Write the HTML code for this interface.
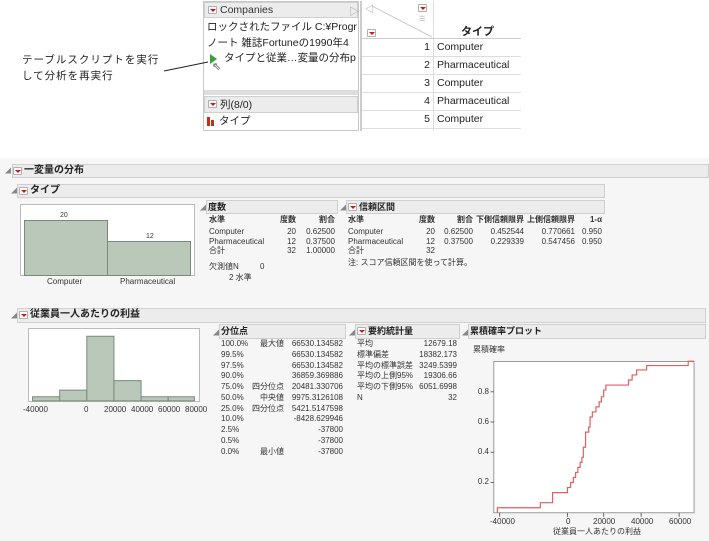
<!DOCTYPE html>
<html><head><meta charset="utf-8"><style>
*{margin:0;padding:0;box-sizing:border-box}
body{width:709px;height:541px;position:relative;background:#fff;font-family:"Liberation Sans","Noto Sans CJK JP",sans-serif;overflow:hidden;color:#222}
.a{position:absolute;white-space:nowrap}
.t{font-size:10.5px;line-height:14px}
.s{font-size:8px;line-height:10px;color:#333}
.r{text-align:right}
.hd{position:absolute;background:#ececec;border:1px solid #cfcfcf}
.ic{position:absolute;width:9px;height:8px;background:#fff;border:1px solid #b0b0b0;border-radius:1px}
.ic:after{content:"";position:absolute;left:1px;top:2px;border-left:3px solid transparent;border-right:3px solid transparent;border-top:3px solid #d01818}
.hb{font-size:10px;font-weight:bold;line-height:14px}
.tri{position:absolute;font-size:6px;color:#888}
.clip{position:absolute;left:204px;top:0;width:154px;height:131px;overflow:hidden}
.clip .a{}
</style></head><body>

<!-- top panel -->
<div class="a" style="left:203px;top:1px;width:156px;height:130px;border:1px solid #c8c8c8;background:#fff"></div>
<div class="hd" style="left:204px;top:2px;width:154px;height:16px"></div>
<div class="ic" style="left:208px;top:6px"></div>
<div class="a t" style="left:220px;top:3px;color:#333">Companies</div>
<div class="a" style="left:349px;top:3px;font-size:10px;color:#999">▷</div>
<div class="clip">
<div class="a t" style="left:3px;top:20px">ロックされたファイル C:¥Progr</div>
<div class="a t" style="left:3px;top:36px">ノート 雑誌Fortuneの1990年4</div>
<div class="a t" style="left:20px;top:51px">タイプと従業…変量の分布p</div>
</div>
<div class="a" style="left:210px;top:54px;width:0;height:0;border-top:5px solid transparent;border-bottom:5px solid transparent;border-left:7px solid #3aa03a"></div>
<div class="a" style="left:212px;top:60px;font-size:11px;color:#555">⇖</div>
<div class="a" style="left:204px;top:90px;width:154px;height:5px;background:#ddd"></div>
<div class="hd" style="left:204px;top:96px;width:154px;height:17px"></div>
<div class="ic" style="left:208px;top:100px"></div>
<div class="a t" style="left:220px;top:98px">列(8/0)</div>
<div class="a" style="left:207px;top:117px;width:3px;height:9px;background:#c0301a"></div>
<div class="a" style="left:211px;top:120px;width:3px;height:6px;background:#c0301a"></div>
<div class="a t" style="left:219px;top:114px">タイプ</div>

<div class="a t" style="left:22px;top:53px;letter-spacing:1px">テーブルスクリプトを実行</div>
<div class="a t" style="left:22px;top:69px;letter-spacing:1px">して分析を再実行</div>
<svg class="a" style="left:0;top:0" width="709" height="160"><line x1="164" y1="71" x2="208" y2="62" stroke="#222" stroke-width="1"/></svg>

<!-- data table -->
<div class="a" style="left:360px;top:1px;width:161px;height:130px;border-left:2px solid #ccc;background:#fff"></div>
<div class="a" style="left:433px;top:1px;width:1px;height:130px;background:#ddd"></div>
<svg class="a" style="left:362px;top:2px" width="72" height="36"><line x1="10" y1="4" x2="70" y2="35" stroke="#ccc"/></svg>
<div class="a" style="left:365px;top:2px;font-size:9px;color:#999">◁</div>
<div class="ic" style="left:418px;top:4px"></div>
<div class="ic" style="left:367px;top:29px"></div>
<div class="a" style="left:419px;top:15px;font-size:7px;color:#aaa">☰</div>
<div class="a" style="left:461px;top:23px;font-size:11px;font-weight:bold">タイプ</div>
<div class="a" style="left:362px;top:38px;width:159px;height:1px;background:#ccc"></div>
<div class="a" style="left:362px;top:56px;width:159px;height:1px;background:#ddd"></div>
<div class="a" style="left:362px;top:74px;width:159px;height:1px;background:#ddd"></div>
<div class="a" style="left:362px;top:92px;width:159px;height:1px;background:#ddd"></div>
<div class="a" style="left:362px;top:110px;width:159px;height:1px;background:#ddd"></div>
<div class="a" style="left:362px;top:128px;width:159px;height:1px;background:#ddd"></div>
<div class="a t r" style="left:362px;top:40px;width:68px">1</div><div class="a t" style="left:437px;top:40px">Computer</div>
<div class="a t r" style="left:362px;top:58px;width:68px">2</div><div class="a t" style="left:437px;top:58px">Pharmaceutical</div>
<div class="a t r" style="left:362px;top:76px;width:68px">3</div><div class="a t" style="left:437px;top:76px">Computer</div>
<div class="a t r" style="left:362px;top:94px;width:68px">4</div><div class="a t" style="left:437px;top:94px">Pharmaceutical</div>
<div class="a t r" style="left:362px;top:112px;width:68px">5</div><div class="a t" style="left:437px;top:112px">Computer</div>

<!-- report -->
<div class="a" style="left:0;top:158px;width:709px;height:383px;background:#f6f6f6"></div>
<div class="tri" style="left:5px;top:166px">◢</div>
<div class="hd" style="left:12px;top:164px;width:697px;height:14px"></div>
<div class="ic" style="left:13px;top:167px"></div>
<div class="a hb" style="left:24px;top:164px">一変量の分布</div>

<div class="tri" style="left:11px;top:186px">◢</div>
<div class="hd" style="left:17px;top:184px;width:588px;height:14px"></div>
<div class="ic" style="left:19px;top:187px"></div>
<div class="a hb" style="left:30px;top:184px">タイプ</div>

<div class="a" style="left:20px;top:204px;width:175px;height:72px;background:#fff;border:1px solid #bbb"></div>
<div class="a" style="left:24px;top:220px;width:84px;height:56px;background:#b9c8b9;border:1px solid #7a8a7a"></div>
<div class="a" style="left:107px;top:241px;width:84px;height:35px;background:#b9c8b9;border:1px solid #7a8a7a"></div>
<div class="a s" style="left:60px;top:211px;font-size:7px">20</div>
<div class="a s" style="left:146px;top:232px;font-size:7px">12</div>
<div class="a s" style="left:47px;top:277px">Computer</div>
<div class="a s" style="left:120px;top:277px">Pharmaceutical</div>

<div class="tri" style="left:200px;top:203px">◢</div>
<div class="hd" style="left:206px;top:200px;width:132px;height:14px"></div>
<div class="a hb" style="left:208px;top:200px;font-size:9px">度数</div>
<div class="tri" style="left:340px;top:203px">◢</div>
<div class="hd" style="left:346px;top:200px;width:259px;height:14px"></div>
<div class="ic" style="left:348px;top:203px"></div>
<div class="a hb" style="left:359px;top:200px;font-size:9px">信頼区間</div>

<div class="a s" style="left:209px;top:215px;font-weight:bold">水準</div>
<div class="a s r" style="left:266px;top:215px;width:30px;font-weight:bold">度数</div>
<div class="a s r" style="left:300px;top:215px;width:35px;font-weight:bold">割合</div>
<div class="a s" style="left:209px;top:227px">Computer</div><div class="a s r" style="left:266px;top:227px;width:30px">20</div><div class="a s r" style="left:295px;top:227px;width:40px">0.62500</div>
<div class="a s" style="left:209px;top:237px">Pharmaceutical</div><div class="a s r" style="left:266px;top:237px;width:30px">12</div><div class="a s r" style="left:295px;top:237px;width:40px">0.37500</div>
<div class="a s" style="left:209px;top:246px">合計</div><div class="a s r" style="left:266px;top:246px;width:30px">32</div><div class="a s r" style="left:295px;top:246px;width:40px">1.00000</div>
<div class="a s" style="left:209px;top:262px">欠測値N</div><div class="a s" style="left:260px;top:262px">0</div>
<div class="a s" style="left:229px;top:273px">2 水準</div>

<div class="a s" style="left:348px;top:215px;font-weight:bold">水準</div>
<div class="a s r" style="left:405px;top:215px;width:30px;font-weight:bold">度数</div>
<div class="a s r" style="left:438px;top:215px;width:35px;font-weight:bold">割合</div>
<div class="a s r" style="left:474px;top:215px;width:50px;font-weight:bold">下側信頼限界</div>
<div class="a s r" style="left:525px;top:215px;width:50px;font-weight:bold">上側信頼限界</div>
<div class="a s r" style="left:580px;top:215px;width:22px;font-weight:bold">1-α</div>
<div class="a s" style="left:348px;top:227px">Computer</div><div class="a s r" style="left:405px;top:227px;width:30px">20</div><div class="a s r" style="left:433px;top:227px;width:40px">0.62500</div><div class="a s r" style="left:474px;top:227px;width:50px">0.452544</div><div class="a s r" style="left:525px;top:227px;width:50px">0.770661</div><div class="a s r" style="left:580px;top:227px;width:22px">0.950</div>
<div class="a s" style="left:348px;top:237px">Pharmaceutical</div><div class="a s r" style="left:405px;top:237px;width:30px">12</div><div class="a s r" style="left:433px;top:237px;width:40px">0.37500</div><div class="a s r" style="left:474px;top:237px;width:50px">0.229339</div><div class="a s r" style="left:525px;top:237px;width:50px">0.547456</div><div class="a s r" style="left:580px;top:237px;width:22px">0.950</div>
<div class="a s" style="left:348px;top:246px">合計</div><div class="a s r" style="left:405px;top:246px;width:30px">32</div>
<div class="a s" style="left:348px;top:258px">注: スコア信頼区間を使って計算。</div>

<!-- section 3 -->
<div class="tri" style="left:11px;top:311px">◢</div>
<div class="hd" style="left:17px;top:308px;width:689px;height:15px"></div>
<div class="ic" style="left:19px;top:311px"></div>
<div class="a hb" style="left:30px;top:308px">従業員一人あたりの利益</div>

<div class="a" style="left:28px;top:328px;width:172px;height:74px;background:#fff;border:1px solid #bbb"></div>
<svg class="a" style="left:0;top:300px" width="709" height="241" viewBox="0 0 1568 717" preserveAspectRatio="none">
<g fill="#b9c8b9" stroke="#7a8a7a" stroke-width="1">
<rect x="72" y="288" width="60" height="12" vector-effect="non-scaling-stroke"/>
<rect x="132" y="268" width="60" height="32" vector-effect="non-scaling-stroke"/>
<rect x="192" y="108" width="60" height="192" vector-effect="non-scaling-stroke"/>
<rect x="252" y="240" width="60" height="60" vector-effect="non-scaling-stroke"/>
<rect x="312" y="288" width="60" height="12" vector-effect="non-scaling-stroke"/>
<rect x="372" y="288" width="58" height="12" vector-effect="non-scaling-stroke"/>
</g>
<rect x="1092" y="183" width="443" height="450" fill="#fff" stroke="#999" vector-effect="non-scaling-stroke"/>
<polyline fill="none" stroke="#e06060" stroke-width="1.2" vector-effect="non-scaling-stroke" points="1100,633 1100,618 1195,618 1195,603 1222,603 1222,573 1255,573 1255,558 1262,558 1262,543 1268,543 1268,528 1273,528 1273,513 1278,513 1278,498 1283,498 1283,483 1287,483 1287,468 1290,468 1290,438 1295,438 1295,393 1302,393 1302,378 1305,378 1305,348 1310,348 1310,333 1318,333 1318,318 1325,318 1325,303 1330,303 1330,288 1335,288 1335,268 1340,268 1340,253 1390,253 1390,238 1398,238 1398,223 1408,223 1408,208 1430,208 1430,195 1522,195 1522,182 1535,182"/>
<g stroke="#666">
<line x1="1085" y1="273" x2="1092" y2="273" vector-effect="non-scaling-stroke"/>
<line x1="1085" y1="363" x2="1092" y2="363" vector-effect="non-scaling-stroke"/>
<line x1="1085" y1="453" x2="1092" y2="453" vector-effect="non-scaling-stroke"/>
<line x1="1085" y1="543" x2="1092" y2="543" vector-effect="non-scaling-stroke"/>
<line x1="1105" y1="633" x2="1105" y2="645" vector-effect="non-scaling-stroke"/>
<line x1="1255" y1="633" x2="1255" y2="645" vector-effect="non-scaling-stroke"/>
<line x1="1335" y1="633" x2="1335" y2="645" vector-effect="non-scaling-stroke"/>
<line x1="1418" y1="633" x2="1418" y2="645" vector-effect="non-scaling-stroke"/>
<line x1="1502" y1="633" x2="1502" y2="645" vector-effect="non-scaling-stroke"/>
</g>
</svg>
<div class="a s" style="left:23px;top:405px">-40000</div>
<div class="a s" style="left:84px;top:405px">0</div>
<div class="a s" style="left:104px;top:405px">20000</div>
<div class="a s" style="left:131px;top:405px">40000</div>
<div class="a s" style="left:158px;top:405px">60000</div>
<div class="a s" style="left:185px;top:405px">80000</div>

<div class="tri" style="left:213px;top:328px">◢</div>
<div class="hd" style="left:219px;top:324px;width:127px;height:15px"></div>
<div class="a hb" style="left:221px;top:324px;font-size:9px">分位点</div>
<div class="tri" style="left:349px;top:328px">◢</div>
<div class="hd" style="left:355px;top:324px;width:105px;height:15px"></div>
<div class="ic" style="left:357px;top:327px"></div>
<div class="a hb" style="left:368px;top:324px;font-size:9px">要約統計量</div>
<div class="tri" style="left:462px;top:328px">◢</div>
<div class="hd" style="left:468px;top:324px;width:238px;height:15px"></div>
<div class="a hb" style="left:470px;top:324px;font-size:9px">累積確率プロット</div>

<div class="a s" style="left:221px;top:339px;line-height:10.75px">100.0%<br>99.5%<br>97.5%<br>90.0%<br>75.0%<br>50.0%<br>25.0%<br>10.0%<br>2.5%<br>0.5%<br>0.0%</div>
<div class="a s r" style="left:244px;top:339px;width:40px;line-height:10.75px">最大値<br><br><br><br>四分位点<br>中央値<br>四分位点<br><br><br><br>最小値</div>
<div class="a s r" style="left:283px;top:339px;width:60px;line-height:10.75px">66530.134582<br>66530.134582<br>66530.134582<br>36859.369886<br>20481.330706<br>9975.3126108<br>5421.5147598<br>-8428.629946<br>-37800<br>-37800<br>-37800</div>
<div class="a s" style="left:357px;top:339px;line-height:10.75px">平均<br>標準偏差<br>平均の標準誤差<br>平均の上側95%<br>平均の下側95%<br>N</div>
<div class="a s r" style="left:407px;top:339px;width:50px;line-height:10.75px">12679.18<br>18382.173<br>3249.5399<br>19306.66<br>6051.6998<br>32</div>

<div class="a s" style="left:473px;top:345px">累積確率</div>
<div class="a s r" style="left:470px;top:387px;width:19px">0.8</div>
<div class="a s r" style="left:470px;top:417px;width:19px">0.6</div>
<div class="a s r" style="left:470px;top:447px;width:19px">0.4</div>
<div class="a s r" style="left:470px;top:477px;width:19px">0.2</div>
<div class="a s" style="left:490px;top:517px">-40000</div>
<div class="a s" style="left:566px;top:517px">0</div>
<div class="a s" style="left:593px;top:517px">20000</div>
<div class="a s" style="left:631px;top:517px">40000</div>
<div class="a s" style="left:669px;top:517px">60000</div>
<div class="a s" style="left:553px;top:527px">従業員一人あたりの利益</div>
</body></html>
